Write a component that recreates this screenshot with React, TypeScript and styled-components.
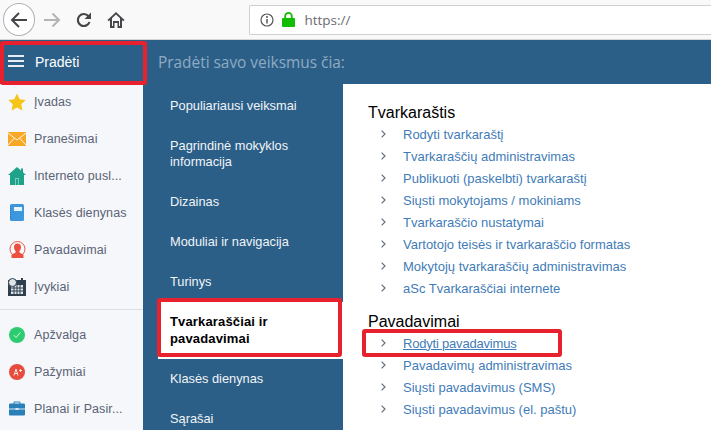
import React from "react";
import styled, { createGlobalStyle } from "styled-components";

const GlobalStyle = createGlobalStyle`
  html, body {
    margin: 0;
    padding: 0;
    overflow: hidden;
    background: #fff;
    font-family: "Liberation Sans", Arial, sans-serif;
  }
`;

const BackIcon = () => (
  <svg width="20" height="20" viewBox="0 0 20 20" fill="none" stroke="#45454a" strokeWidth="2">
    <path d="M18 10H3M10 3l-7 7 7 7" />
  </svg>
);
const ForwardIcon = () => (
  <svg width="18" height="18" viewBox="0 0 18 18" fill="none" stroke="#b4b4b6" strokeWidth="2">
    <path d="M1 9h15M9.5 2.5 16 9l-6.500 6.500" />
  </svg>
);
const ReloadIcon = () => (
  <svg width="18" height="18" viewBox="0 0 18 18" fill="none">
    <path d="M14.500 11a6 6 0 1 1-1-5.800L15 7" stroke="#45454a" strokeWidth="2.200" />
    <path d="M16 1.500V8H9.500z" fill="#45454a" />
  </svg>
);
const HomeIcon = () => (
  <svg width="18" height="18" viewBox="0 0 18 18">
    <path
      d="M9 1 .5 9l1.300 1.300L3 9.200V17h4.500v-5h3v5H15V9.200l1.200 1.100L17.500 9zM5 15V7.300l4-3.800 4 3.800V15h-1v-5H6v5z"
      fill="#45454a"
    />
  </svg>
);
const InfoIcon = () => (
  <svg width="14" height="14" viewBox="0 0 14 14" fill="none">
    <circle cx="7" cy="7" r="6" stroke="#55555a" strokeWidth="1.200" />
    <path d="M7 6v4.500" stroke="#55555a" strokeWidth="1.500" />
    <circle cx="7" cy="3.900" r="1" fill="#55555a" />
  </svg>
);
const LockIcon = () => (
  <svg width="13" height="15" viewBox="0 0 13 15" fill="none">
    <path d="M3.200 7V4.200a3.300 3.300 0 0 1 6.600 0V7" stroke="#12bc00" strokeWidth="1.800" />
    <rect y="6" width="13" height="9" rx="1" fill="#12bc00" />
  </svg>
);

const StarIcon = () => (
  <svg width="18" height="18" viewBox="0 0 18 18">
    <path d="m9 .5 2.700 5.700 6 .8-4.400 4.200 1.100 6.200L9 14.400l-5.400 3 1.100-6.200L.3 7l6-.8z" fill="#f5c518" />
  </svg>
);
const MailIcon = () => (
  <svg width="18" height="14" viewBox="0 0 18 14">
    <rect width="18" height="14" fill="#f9a825" />
    <path d="m0 1 9 7 9-7M0 13l6.500-7M18 13l-6.500-7" stroke="#fff" fill="none" strokeWidth="0.900" />
  </svg>
);
const HouseIcon = () => (
  <svg width="18" height="18" viewBox="0 0 18 18">
    <path d="M9 0 0 8h2v10h14V8h2l-3-2.700V1.500h-2v2z" fill="#1fa28a" />
    <rect x="7" y="11" width="4" height="7" fill="#7fcabc" />
    <rect x="8" y="12" width="2" height="6" fill="#1fa28a" />
  </svg>
);
const NotebookIcon = () => (
  <svg width="14" height="17" viewBox="0 0 14 17">
    <rect width="14" height="17" rx="1.500" fill="#3d97de" />
    <rect x="4" y="3" width="8" height="4" fill="#e8f3fb" />
    <path d="M0 2v13" stroke="#1f6fb0" strokeWidth="1.500" strokeDasharray="1 1" />
  </svg>
);
const PersonIcon = () => (
  <svg width="17" height="17" viewBox="0 0 17 17">
    <circle cx="8.500" cy="8" r="7.500" fill="none" stroke="#ec5a4b" strokeWidth="1" />
    <path
      d="M8.500 2.500c2.300 0 3.500 1.700 3.500 3.800 0 1.500-.7 3-1.600 3.800v1.300l4.100 2.300V17h-12v-3.300l4.100-2.300v-1.300C5.700 9.300 5 7.800 5 6.300c0-2.100 1.200-3.800 3.500-3.800z"
      fill="#ec4f3e"
    />
  </svg>
);
const CalendarIcon = () => (
  <svg width="18" height="18" viewBox="0 0 18 18">
    <rect y="2" width="18" height="16" fill="#2e3f50" />
    <rect x="3" y="7" width="12" height="9" fill="#dfe4e8" />
    <path d="M3 10h12M3 13h12M6 7v9M9 7v9M12 7v9" stroke="#2e3f50" strokeWidth="1" />
    <circle cx="4.500" cy="4.500" r="4" fill="#dfe4e8" stroke="#2e3f50" />
    <rect x="13" y="0" width="2" height="4" fill="#2e3f50" />
  </svg>
);
const CheckBadge = () => (
  <svg width="16" height="16" viewBox="0 0 16 16">
    <circle cx="8" cy="8" r="8" fill="#2ecc71" />
    <path d="m4.800 8.200 2.300 2.300 4.200-5" stroke="#d6f7e3" fill="none" strokeWidth="1" />
  </svg>
);
const GradeBadge = () => (
  <svg width="16" height="16" viewBox="0 0 16 16">
    <circle cx="8" cy="8" r="8" fill="#e74c3c" />
    <path d="m5 11.500 2-6.500 2 6.500M5.800 9.500h2.400M10 6.500h3M11.500 5v3" stroke="#fde3e0" fill="none" strokeWidth="1" />
  </svg>
);
const CaseIcon = () => (
  <svg width="16" height="15" viewBox="0 0 16 15">
    <path d="M5 3V1h6v2" stroke="#2980b9" fill="none" strokeWidth="1" />
    <rect y="2.500" width="16" height="12" rx="1" fill="#2980b9" />
    <path d="M0 8h16" stroke="#d9e9f4" strokeWidth="1" />
    <rect x="6.500" y="7" width="3" height="2" fill="#d9e9f4" />
  </svg>
);
const ChevronIcon = () => (
  <svg width="5" height="8" viewBox="0 0 5 8" fill="none" stroke="#5f6f84" strokeWidth="1.200">
    <path d="m.6.600 3.400 3.400-3.400 3.400" />
  </svg>
);

const menuTop = [
  { label: "Įvadas", icon: <StarIcon /> },
  { label: "Pranešimai", icon: <MailIcon /> },
  { label: "Interneto pusl...", icon: <HouseIcon /> },
  { label: "Klasės dienynas", icon: <NotebookIcon /> },
  { label: "Pavadavimai", icon: <PersonIcon /> },
  { label: "Įvykiai", icon: <CalendarIcon /> },
];
const menuBottom = [
  { label: "Apžvalga", icon: <CheckBadge /> },
  { label: "Pažymiai", icon: <GradeBadge /> },
  { label: "Planai ir Pasir...", icon: <CaseIcon /> },
];
const sections = [
  "Populiariausi veiksmai",
  "Pagrindinė mokyklos informacija",
  "Dizainas",
  "Moduliai ir navigacija",
  "Turinys",
  "Tvarkaraščiai ir pavadavimai",
  "Klasės dienynas",
  "Sąrašai",
];
const timetableLinks = [
  "Rodyti tvarkaraštį",
  "Tvarkaraščių administravimas",
  "Publikuoti (paskelbti) tvarkaraštį",
  "Siųsti mokytojams / mokiniams",
  "Tvarkaraščio nustatymai",
  "Vartotojo teisės ir tvarkaraščio formatas",
  "Mokytojų tvarkaraščių administravimas",
  "aSc Tvarkaraščiai internete",
];
const substitutionLinks = [
  "Rodyti pavadavimus",
  "Pavadavimų administravimas",
  "Siųsti pavadavimus (SMS)",
  "Siųsti pavadavimus (el. paštu)",
];

function App() {
  return (
    <Page>
      <GlobalStyle />
      <Toolbar>
        <BackButton>
          <BackIcon />
        </BackButton>
        <NavIcon $width={18}>
          <ForwardIcon />
        </NavIcon>
        <NavIcon $width={18} $left={14}>
          <ReloadIcon />
        </NavIcon>
        <NavIcon $width={18} $left={14}>
          <HomeIcon />
        </NavIcon>
        <UrlBar>
          <InfoIcon />
          <LockIcon />
          <UrlText>https://</UrlText>
        </UrlBar>
      </Toolbar>
      <Header>
        <StartButton>
          <Burger>
            <span />
            <span />
            <span />
          </Burger>
          Pradėti
        </StartButton>
        <HeaderTitle>Pradėti savo veiksmus čia:</HeaderTitle>
      </Header>
      <Body>
        <Sidebar>
          {menuTop.map((item) => (
            <SideItem key={item.label}>
              <SideIcon>{item.icon}</SideIcon>
              <SideLabel>{item.label}</SideLabel>
            </SideItem>
          ))}
          <SideDivider />
          {menuBottom.map((item) => (
            <SideItem key={item.label}>
              <SideIcon>{item.icon}</SideIcon>
              <SideLabel>{item.label}</SideLabel>
            </SideItem>
          ))}
        </Sidebar>
        <Sections>
          {sections.map((name, index) => (
            <SectionItem key={name} $active={index === 5}>
              {name}
            </SectionItem>
          ))}
        </Sections>
        <Content>
          <GroupTitle>Tvarkaraštis</GroupTitle>
          <LinkList $top={1}>
            {timetableLinks.map((name) => (
              <LinkRow key={name}>
                <Chevron>
                  <ChevronIcon />
                </Chevron>
                <LinkText>{name}</LinkText>
              </LinkRow>
            ))}
          </LinkList>
          <GroupTitle $second>Pavadavimai</GroupTitle>
          <LinkList $top={1}>
            {substitutionLinks.map((name, index) => (
              <LinkRow key={name}>
                <Chevron>
                  <ChevronIcon />
                </Chevron>
                <LinkText $hover={index === 0}>{name}</LinkText>
              </LinkRow>
            ))}
          </LinkList>
        </Content>
      </Body>
      <Mark $left={0} $top={41} $width={147} $height={44} />
      <Mark $left={157} $top={298} $width={185} $height={59} />
      <Mark $left={362} $top={329} $width={200} $height={28} />
    </Page>
  );
}

const Page = styled.div`
  position: relative;
  width: 711px;
  height: 430px;
  overflow: hidden;
  display: flex;
  flex-direction: column;
  font-family: "Liberation Sans", Arial, sans-serif;
`;
const Toolbar = styled.div`
  display: flex;
  align-items: center;
  height: 40px;
  padding-left: 3px;
  box-sizing: border-box;
  background: #f9f9fa;
  border-bottom: 1px solid #d6d6d8;
`;
const BackButton = styled.div`
  display: flex;
  align-items: center;
  justify-content: center;
  width: 33px;
  height: 33px;
  margin-right: 8px;
  box-sizing: border-box;
  border: 1px solid #b1b1b3;
  border-radius: 50%;
  background: #fff;
`;
const NavIcon = styled.div<{ $width: number; $left?: number }>`
  display: flex;
  width: ${(p) => p.$width}px;
  margin-left: ${(p) => p.$left ?? 0}px;
`;
const UrlBar = styled.div`
  display: flex;
  align-items: center;
  gap: 8px;
  width: 470px;
  height: 30px;
  margin-left: 124px;
  padding-left: 10px;
  box-sizing: border-box;
  background: #fff;
  border: 1px solid #d0d0d2;
  border-right: 0;
  border-radius: 2px 0 0 2px;
`;
const UrlText = styled.span`
  margin-left: 1px;
  color: #6b6b70;
  font-family: "Open Sans", sans-serif;
  font-size: 13.5px;
`;
const Header = styled.div`
  display: flex;
  align-items: center;
  height: 44px;
  background: #2c5f88;
`;
const StartButton = styled.div`
  display: flex;
  align-items: center;
  gap: 11px;
  width: 143px;
  padding-left: 8px;
  box-sizing: border-box;
  color: #fff;
  font-size: 14px;
`;
const Burger = styled.div`
  display: flex;
  flex-direction: column;
  gap: 3px;
  width: 16px;
  margin-bottom: 3px;

  span {
    height: 2px;
    background: #e8eef3;
  }
`;
const HeaderTitle = styled.div`
  padding-left: 15px;
  color: #8fabc2;
  font-family: "Open Sans", sans-serif;
  font-size: 15.4px;
`;
const Body = styled.div`
  display: flex;
  flex: 1;
  min-height: 0;
`;
const Sidebar = styled.div`
  width: 143px;
  box-sizing: border-box;
  background: #f5f7fa;
`;
const SideItem = styled.div`
  display: flex;
  align-items: center;
  height: 37px;
  padding: 0 0 2px 8px;
  box-sizing: border-box;
`;
const SideIcon = styled.div`
  display: flex;
  align-items: center;
  justify-content: center;
  width: 18px;
  margin-right: 8px;
`;
const SideLabel = styled.div`
  color: #5a6275;
  font-size: 12.5px;
  letter-spacing: 0.1px;
  white-space: nowrap;
`;
const SideDivider = styled.div`
  height: 1px;
  margin: 3px 0 7px;
  background: #dcdfe3;
`;
const Sections = styled.div`
  width: 200px;
  padding-top: 1.500px;
  box-sizing: border-box;
  background: #2c5f88;
`;
const SectionItem = styled.div<{ $active?: boolean }>`
  margin-left: ${(p) => (p.$active ? 15 : 0)}px;
  padding: 12px 24px 11.500px ${(p) => (p.$active ? 12 : 27)}px;
  color: ${(p) => (p.$active ? "#000" : "#f0f4f7")};
  background: ${(p) => (p.$active ? "#fff" : "transparent")};
  font-size: ${(p) => (p.$active ? 13 : 12.8)}px;
  font-weight: ${(p) => (p.$active ? 700 : 400)};
  letter-spacing: ${(p) => (p.$active ? 0.15 : 0)}px;
  line-height: 16.500px;
`;
const Content = styled.div`
  flex: 1;
  padding: 20px 0 0 25px;
  background: #fff;
`;
const GroupTitle = styled.div<{ $second?: boolean }>`
  margin-top: ${(p) => (p.$second ? 14 : 0)}px;
  color: #000;
  font-size: 16px;
  line-height: 18px;
`;
const LinkList = styled.div<{ $top: number }>`
  display: flex;
  flex-direction: column;
  margin-top: ${(p) => p.$top}px;
`;
const LinkRow = styled.div`
  display: flex;
  align-items: center;
  height: 22px;
`;
const Chevron = styled.span`
  display: flex;
  width: 35px;
  padding-left: 13px;
  box-sizing: border-box;
`;
const LinkText = styled.span<{ $hover?: boolean }>`
  color: #3f7cb8;
  font-size: 13px;
  letter-spacing: ${(p) => (p.$hover ? -0.2 : 0)}px;
  text-decoration: ${(p) => (p.$hover ? "underline" : "none")};
`;
const Mark = styled.div<{ $left: number; $top: number; $width: number; $height: number }>`
  position: absolute;
  left: ${(p) => p.$left}px;
  top: ${(p) => p.$top}px;
  width: ${(p) => p.$width}px;
  height: ${(p) => p.$height}px;
  box-sizing: border-box;
  border: 4px solid #e8212e;
  border-radius: 3px;
`;

export default App;
